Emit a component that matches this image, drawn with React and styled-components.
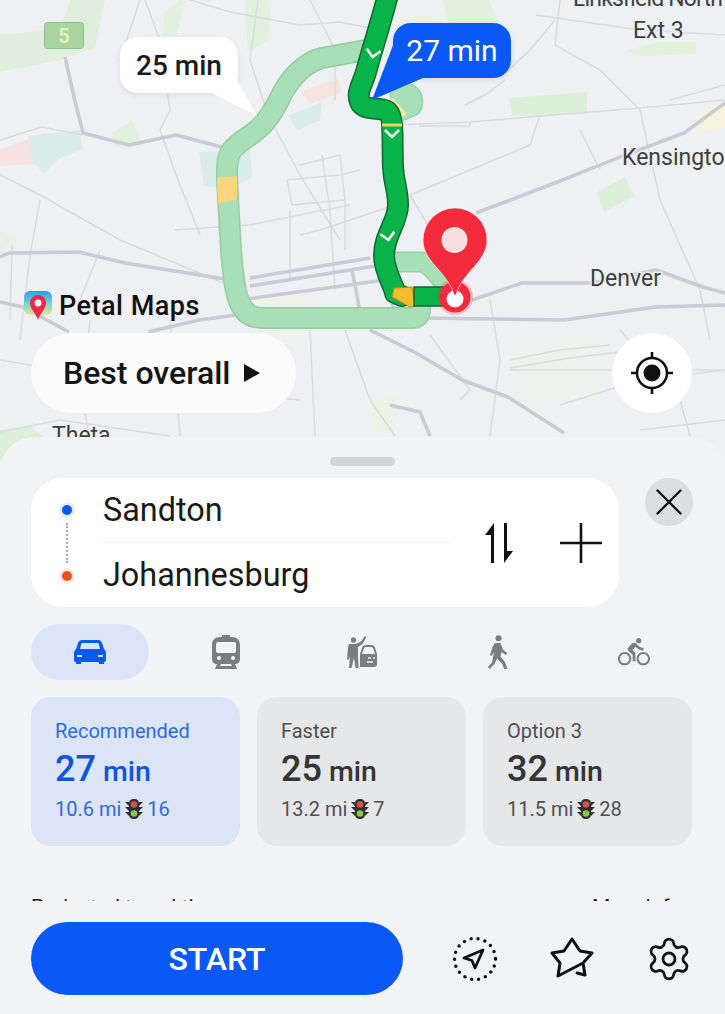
import React from 'react'
import styled, { createGlobalStyle } from 'styled-components'
import { MdDirectionsBike } from 'react-icons/md'
import { Settings, X } from 'lucide-react'

const GlobalStyle = createGlobalStyle`
    html, body { margin: 0; padding: 0; background: #f1f3f5; }
    * { box-sizing: border-box; }
`

const Screen = styled.div`
    width: 725px;
    height: 1014px;
    overflow: hidden;
    display: flex;
    flex-direction: column;
    font-family: Roboto, "Noto Sans", sans-serif;
    color: #1a1a1a;
`
const MapArea = styled.div`
    position: relative;
    height: 475px;
    flex-shrink: 0;
    background: #eef0f3;
`
const MapCanvas = styled.svg`
    display: block;
    width: 725px;
    height: 475px;
`
const MapLabel = styled.text`
    font-family: Roboto, sans-serif;
    font-size: 23px;
    fill: #3c3f42;
    paint-order: stroke;
    stroke: #eef0f3;
    stroke-width: 3px;
`
const Bubble = styled.div`
    position: absolute;
    left: ${p => p.$x}px;
    top: ${p => p.$y}px;
    width: 118px;
    height: ${p => p.$h}px;
    border-radius: 18px;
    display: flex;
    align-items: center;
    justify-content: center;
    font-size: ${p => (p.$active ? 30 : 28)}px;
    font-weight: ${p => (p.$active ? 400 : 500)};
    color: ${p => (p.$active ? '#fff' : '#1a1a1a')};
    background: ${p => (p.$active ? '#0a59f7' : '#fff')};
    box-shadow: 0 2px 6px rgba(0, 0, 0, 0.08);
`
const BubbleTail = styled.svg`
    position: absolute;
    left: 0;
    top: 0;
    width: 1px;
    height: 1px;
    overflow: visible;
`
const BubbleText = styled.span`
    position: relative;
`
const Watermark = styled.div`
    position: absolute;
    left: 24px;
    top: 290px;
    display: flex;
    align-items: center;
    gap: 7px;
    font-size: 27px;
    font-weight: 500;
    letter-spacing: 0.5px;
    color: #111;
`
const MapControls = styled.div`
    position: absolute;
    left: 31px;
    right: 33px;
    top: 333px;
    display: flex;
    justify-content: space-between;
`
const SortPill = styled.div`
    width: 265px;
    height: 80px;
    border-radius: 40px;
    background: #fbfbfc;
    display: flex;
    align-items: center;
    gap: 13px;
    padding-left: 32px;
    font-size: 32px;
    font-weight: 500;
    color: #151515;
`
const LocateButton = styled.div`
    width: 80px;
    height: 80px;
    border-radius: 50%;
    background: #fff;
    display: flex;
    align-items: center;
    justify-content: center;
`

const Sheet = styled.div`
    position: relative;
    flex: 1;
    margin-top: -38px;
    padding: 20px 32px 0 31px;
    background: #f1f3f5;
    border-radius: 34px 34px 0 0;
    display: flex;
    flex-direction: column;
`
const Handle = styled.div`
    width: 65px;
    height: 9px;
    border-radius: 5px;
    background: #d3d5d8;
    align-self: center;
    margin-bottom: 12px;
`
const SearchRow = styled.div`
    display: flex;
    justify-content: space-between;
    align-items: flex-start;
`
const SearchCard = styled.div`
    width: 588px;
    height: 129px;
    border-radius: 32px;
    background: #fff;
    display: flex;
    align-items: center;
    padding-left: 29px;
`
const StopRail = styled.div`
    width: 14px;
    height: 76px;
    display: flex;
    flex-direction: column;
    align-items: center;
    justify-content: space-between;
`
const StopDot = styled.div`
    width: 10px;
    height: 10px;
    flex-shrink: 0;
    border-radius: 50%;
    background: ${p => p.$color};
    box-shadow: 0 0 0 3px ${p => p.$halo};
`
const StopLine = styled.div`
    flex: 1;
    margin: 8px 0;
    border-left: 2px dotted #a8a8a8;
`
const StopFields = styled.div`
    width: 347px;
    margin-left: 29px;
    display: flex;
    flex-direction: column;
`
const StopField = styled.div`
    height: 64px;
    display: flex;
    align-items: center;
    font-size: 32.4px;
    border-bottom: ${p => (p.$divider ? '1px solid #eeeeee' : 'none')};
`
const SearchActions = styled.div`
    display: flex;
    align-items: center;
    gap: 46px;
    margin-left: 34px;
`
const CloseButton = styled.div`
    width: 48px;
    height: 48px;
    border-radius: 50%;
    background: #dcdee0;
    display: flex;
    align-items: center;
    justify-content: center;
`
const ModeRow = styled.div`
    display: flex;
    justify-content: space-between;
    margin-top: 17px;
`
const ModeTab = styled.div`
    width: 118px;
    height: 56px;
    border-radius: 28px;
    display: flex;
    align-items: center;
    justify-content: center;
    color: #7b7d80;
    background: ${p => (p.$active ? '#dbe5f7' : 'transparent')};
`
const RouteRow = styled.div`
    display: flex;
    gap: 17px;
    margin-top: 17px;
`
const RouteCard = styled.div`
    width: 209px;
    height: 149px;
    border-radius: 20px;
    padding: 22px 0 0 24px;
    background: ${p => (p.$active ? '#dbe5f7' : '#e6e7e9')};
    color: ${p => (p.$active ? '#0c55e0' : '#333537')};
`
const RouteTag = styled.div`
    font-size: 20px;
    line-height: 24px;
    opacity: 0.85;
`
const RouteTime = styled.div`
    font-size: 28.5px;
    font-weight: 500;
    line-height: 44px;
    margin-top: 4px;
    b {
        font-size: 36px;
        font-weight: 500;
    }
`
const RouteMeta = styled.div`
    display: flex;
    align-items: center;
    gap: 4px;
    font-size: 20px;
    line-height: 26px;
    margin-top: 2px;
    opacity: 0.85;
`
const ClippedDetails = styled.div`
    height: 55px;
    overflow: hidden;
    display: flex;
    justify-content: space-between;
    padding-top: 49px;
    font-size: 21px;
    line-height: 24px;
    white-space: nowrap;
`
const BottomBar = styled.div`
    display: flex;
    align-items: center;
    margin-top: 21px;
`
const StartButton = styled.div`
    width: 372px;
    height: 73px;
    border-radius: 37px;
    background: #0a59f7;
    color: #fff;
    font-size: 32px;
    font-weight: 500;
    display: flex;
    align-items: center;
    justify-content: center;
`
const BarIcons = styled.div`
    flex: 1;
    display: flex;
    justify-content: space-between;
    align-items: center;
    padding: 0 0 0 49px;
`

const greens = [
    ['M0 34 L60 30 L70 0 L105 0 L95 48 L60 60 L0 72Z', '#e0efdd'],
    ['M165 12 L180 0 L186 0 L170 60 L160 58Z', '#e3f0e0'],
    ['M245 0 L272 0 L268 40 L248 52Z', '#e2f0de'],
    ['M444 0 L488 0 L500 24 L470 32 L448 22Z', '#e2f0de'],
    ['M510 98 L587 92 L587 114 L512 116Z', '#dcefd8'],
    ['M597 192 L625 177 L634 196 L604 212Z', '#dcefd8'],
    ['M628 50 L660 42 L696 42 L696 54 L634 56Z', '#e2f0de'],
    ['M0 150 L30 138 L34 164 L0 166Z', '#f6e2e0'],
    ['M28 136 L80 130 L82 150 L60 158 L44 174 L34 164Z', '#d9ede8'],
    ['M112 134 L132 120 L144 146 L116 148Z', '#e2f0de'],
    ['M300 92 L338 78 L342 92 L310 104Z', '#f6e4e0'],
    ['M288 116 L322 102 L320 120 L298 130Z', '#d9ede8'],
    ['M199 152 L250 150 L252 178 L230 188 L204 186Z', '#d9ede8'],
    ['M695 118 L725 100 L725 128 L698 132Z', '#f8f3dc'],
    ['M0 230 L20 240 L0 250Z', '#e9f2e2'],
    ['M0 430 L30 426 L60 450 L0 460Z', '#dcefd8'],
    ['M370 400 L400 395 L395 430 L372 432Z', '#eaf3e6'],
    ['M510 340 L600 335 L600 400 L515 405Z', '#edf2ee'],
    ['M250 300 L310 296 L300 340 L255 330Z', '#f0f1e8'],
]

const thickRoads = [
    [0, 257, 9, 253, 79, 252, 125, 263, 231, 280],
    [65, 57, 74, 97, 83, 133, 129, 145, 176, 135, 222, 147],
    [476, 213, 555, 183, 620, 157, 684, 133, 725, 103],
    [425, 318, 564, 320, 656, 307, 725, 305],
    [472, 300, 522, 283, 592, 283, 656, 270, 703, 287, 725, 293],
    [370, 330, 416, 353, 462, 380, 508, 397, 564, 433],
    [148, 332, 199, 320, 236, 315],
    [0, 302, 23, 307, 69, 332],
    [250, 278, 370, 258],
    [250, 286, 375, 266],
    [240, 300, 385, 280],
    [385, 262, 395, 320],
    [352, 270, 362, 322],
    [390, 405, 420, 412, 430, 436],
]

const thinRoads = [
    [0, 140, 42, 127, 83, 135],
    [145, 0, 160, 40, 170, 110, 160, 130, 178, 180, 200, 235],
    [0, 175, 40, 195, 120, 240, 240, 290],
    [40, 200, 30, 255, 20, 340],
    [190, 0, 230, 12, 300, 25, 340, 22, 380, 30],
    [258, 0, 250, 60, 268, 115, 300, 175, 340, 240],
    [310, 0, 335, 50, 335, 100],
    [300, 165, 340, 155, 345, 200, 345, 250],
    [287, 180, 340, 175, 360, 170],
    [287, 180, 292, 205, 345, 200],
    [322, 155, 330, 210, 335, 290],
    [290, 210, 290, 280],
    [175, 230, 250, 225, 350, 205],
    [300, 235, 320, 230, 395, 205],
    [410, 195, 530, 145, 540, 115],
    [395, 125, 470, 122, 640, 108, 725, 100],
    [420, 122, 420, 126, 470, 126, 470, 122],
    [560, 0, 555, 45, 600, 70, 640, 110, 660, 200, 700, 290, 710, 340],
    [536, 15, 640, 30, 725, 35],
    [500, 78, 530, 50, 555, 20],
    [465, 105, 485, 95, 505, 80],
    [410, 195, 440, 245],
    [490, 300, 500, 360, 490, 436],
    [580, 130, 600, 170],
    [670, 100, 725, 85],
    [170, 320, 180, 436],
    [90, 320, 82, 400, 90, 436],
    [0, 432, 60, 420, 170, 436],
    [310, 330, 315, 436],
    [345, 330, 370, 400, 395, 436],
    [0, 360, 120, 380, 300, 400],
    [510, 360, 560, 350, 610, 345],
    [510, 368, 570, 358, 620, 352],
    [430, 335, 470, 390, 460, 400],
    [510, 370, 720, 370],
    [560, 405, 640, 380, 725, 370],
    [620, 330, 680, 400, 690, 436],
    [640, 430, 725, 420],
    [120, 60, 140, 0],
    [80, 300, 100, 250],
    [12, 245, 10, 320],
]

const toPoints = arr => {
    const out = []
    for (let i = 0; i < arr.length; i += 2) out.push(`${arr[i]},${arr[i + 1]}`)
    return out.join(' ')
}

const Line = ({ d, outline, color, width }) => (
    <g fill="none" strokeLinecap="round" strokeLinejoin="round">
        <path d={d} stroke={outline} strokeWidth={width + 3} />
        <path d={d} stroke={color} strokeWidth={width} />
    </g>
)

const Chevron = ({ x, y, rotate = 0 }) => (
    <path
        d={`M${x - 7} ${y - 4} L${x} ${y + 3} L${x + 7} ${y - 4}`}
        transform={`rotate(${rotate} ${x} ${y})`}
        fill="none"
        stroke="#fff"
        strokeWidth="2.6"
    />
)

const altA = 'M366 50 L322 58 C306 62 292 76 283 92 C276 106 272 114 265 122 C256 134 240 140 232 150 C226 158 227 170 227 180 L231 250 C234 285 236 300 244 310 C250 317 256 318 265 318 L412 318 C422 318 420 308 420 304'
const altB = 'M400 94 C412 90 414 100 412 106 L398 112'
const altC = 'M392 262 L420 262 C430 262 436 274 452 292'
const mainA = 'M388 -5 C380 25 372 50 366 72 C362 86 356 92 360 102 C364 112 382 106 388 112 C394 118 392 140 393 167 C394 185 398 190 398 205 C398 222 384 235 384 255 C384 272 394 285 395 293 L402 296'

const RouteMap = () => (
    <MapCanvas viewBox="0 0 725 475">
        {greens.map(([d, fill], i) => <path key={i} d={d} fill={fill} />)}
        <g fill="none" strokeLinejoin="round">
            {thinRoads.map((r, i) => <polyline key={i} points={toPoints(r)} stroke="#d9dbde" strokeWidth="1.5" />)}
            {thickRoads.map((r, i) => <polyline key={i} points={toPoints(r)} stroke="#c9ccd0" strokeWidth="3.5" />)}
        </g>
        <rect x="44.5" y="22.5" width="39" height="26" rx="3" fill="#a8d59f" stroke="#8fbf8b" />
        <text x="64" y="43" textAnchor="middle" fontFamily="Roboto" fontWeight="700" fontSize="20" fill="#e8efb0">5</text>
        <Line d={altC} outline="#98d2a6" color="#a8dfb6" width={18} />
        <Line d={altB} outline="#98d2a6" color="#a8dfb6" width={18} />
        <path d="M390 100 L404 116" stroke="#fde9a3" strokeWidth="7" />
        <Line d={altA} outline="#93cea1" color="#a8dfb6" width={19} />
        <path d="M217 178 L237 176 L237 199 L218 204Z" fill="#fdd67e" />
        <Line d={mainA} outline="#0d6a30" color="#08b34a" width={19} />
        <path d="M382 125 L402 125" stroke="#e8d85a" strokeWidth="3" />
        <path d="M394 288 L412 287 L415 306 L410 307 L392 297Z" fill="#fbbc2d" stroke="#b48a20" strokeWidth="1" />
        <path d="M414 287 L444 287 L444 306 L414 306Z" fill="#08b34a" stroke="#0d6a30" strokeWidth="1.5" />
        <Chevron x={373} y={54} rotate={10} />
        <Chevron x={392} y={134} />
        <Chevron x={388} y={237} rotate={-10} />
        <circle cx="455" cy="297" r="18" fill="#f22c3d" opacity="0.25" />
        <circle cx="455" cy="297" r="15.5" fill="#f22c3d" />
        <circle cx="455" cy="299" r="8.5" fill="#fff" />
        <path d="M423 240 A32 32 0 1 1 487 240 C487 262 462 272 456 295 L454 295 C448 272 423 262 423 240Z" fill="#f22c3d" stroke="#ffffff88" strokeWidth="1" />
        <circle cx="454.5" cy="240" r="13" fill="#f7dedf" />
        <MapLabel x="573" y="6" textLength="150">Linksfield North</MapLabel>
        <MapLabel x="633" y="38">Ext 3</MapLabel>
        <MapLabel x="622" y="165">Kensington</MapLabel>
        <MapLabel x="590" y="286">Denver</MapLabel>
        <MapLabel x="52" y="443">Theta</MapLabel>
    </MapCanvas>
)

const PetalLogo = () => (
    <svg width="28" height="30" viewBox="0 0 28 30">
        <defs>
            <linearGradient id="petal" x1="0" y1="0" x2="0" y2="1">
                <stop offset="0" stopColor="#2d9bf0" />
                <stop offset="0.55" stopColor="#7fd6d0" />
                <stop offset="1" stopColor="#e7e58a" />
            </linearGradient>
        </defs>
        <rect x="0" y="0" width="28" height="24" rx="6" fill="url(#petal)" />
        <path d="M6 12 A8 8 0 1 1 22 12 C22 18 16 22 14 29 C12 22 6 18 6 12Z" fill="#ee2a4a" />
        <circle cx="14" cy="12" r="3.4" fill="#fff" />
    </svg>
)

const PlayGlyph = () => (
    <svg width="18" height="20" viewBox="0 0 18 20">
        <path d="M1 1 L17 10 L1 19Z" fill="#111" />
    </svg>
)

const LocateIcon = () => (
    <svg width="44" height="44" viewBox="0 0 44 44" fill="none" stroke="#111" strokeWidth="2.6">
        <circle cx="22" cy="22" r="15" />
        <circle cx="22" cy="22" r="8.5" fill="#111" stroke="none" />
        <path d="M22 1v6M22 37v6M1 22h6M37 22h6" />
    </svg>
)

const SwapIcon = () => (
    <svg width="30" height="40" viewBox="0 0 30 40" fill="#111">
        <path d="M7 40 V12 H1 L10 0 V40Z" />
        <path d="M23 0 V28 H29 L20 40 V0Z" />
    </svg>
)

const PlusIcon = () => (
    <svg width="42" height="40" viewBox="0 0 42 40" stroke="#111" strokeWidth="2.6">
        <path d="M0 20 H42 M21 0 V40" />
    </svg>
)

const CarIcon = () => (
    <svg width="32" height="26" viewBox="0 0 32 26" fill="#0a59f7">
        <path d="M8 1 H24 C26 1 27 2 28 4 L30 10 C31.500 11 32 13 32 15 V21 C32 22.500 31 23 30 23 V25 H25 V23 H7 V25 H2 V23 C1 23 0 22.500 0 21 V15 C0 13 .5 11 2 10 L4 4 C5 2 6 1 8 1Z" />
        <path d="M7.500 4 H24.500 L26 10 H6Z" fill="#dbe5f7" />
        <path d="M3 16 H8 V18 H3ZM24 16 H29 V18 H24Z" fill="#dbe5f7" />
    </svg>
)

const TrainIcon = () => (
    <svg width="28" height="34" viewBox="0 0 28 34" fill="#7b7d80">
        <path d="M10 0 H18 V2 H20 C25 2 28 5 28 10 V24 C28 27 26 29 23 29 H5 C2 29 0 27 0 24 V10 C0 5 3 2 8 2 H10Z" />
        <rect x="4" y="7" width="20" height="11" rx="2" fill="#f1f3f5" />
        <circle cx="7" cy="23" r="2" fill="#f1f3f5" />
        <circle cx="21" cy="23" r="2" fill="#f1f3f5" />
        <path d="M5 29 H9 L8 31 H20 L19 29 H23 L25 34 H3Z" />
    </svg>
)

const TaxiIcon = () => (
    <svg width="30" height="34" viewBox="0 0 30 34" fill="#7b7d80">
        <circle cx="6.500" cy="5" r="2.700" />
        <path d="M2 9 H9 L14 6.500 L18 1 L19.500 2 L15.500 9 L11 12 V20 L11.500 33 H8.500 L7 23 L4.500 33 H2 L3 21 L1.500 25 L0 24 L1 12Z" />
        <path d="M14 19 L16 13 C16.500 11.500 18 11 19 11 H24 C26 11 27 12 27.500 14 L29 19" fill="none" stroke="#7b7d80" strokeWidth="2" />
        <path d="M13 19 H30 V29 C30 31 29 32 27 32 H13Z" />
        <path d="M21 23 H24 M26 23 H28 M20 27 H26" stroke="#f1f3f5" strokeWidth="1.400" />
    </svg>
)

const WalkIcon = () => (
    <svg width="20" height="34" viewBox="0 0 20 34" fill="#7b7d80">
        <circle cx="10.500" cy="3.200" r="3" />
        <path d="M7 8 H12.500 L15 14.500 L19 18 L17.800 20 L13.500 17 L12.500 21.500 L17 27 L19.500 34 L16.200 34 L14 28.500 L9 23.500 L6.500 29 L1.500 34 L0 32 L4 27.500 L6 17 L3.500 21 L2 20 L4.500 12Z" />
    </svg>
)

const TrafficLight = () => (
    <svg width="18" height="20" viewBox="0 0 18 20">
        <path d="M0 3 H4 V7 Z M18 3 H14 V7 Z M0 8 H4 V12 Z M18 8 H14 V12 Z M0 13 H4 V17 Z M18 13 H14 V17 Z" fill="#111" />
        <rect x="4" y="0" width="10" height="20" rx="4.500" fill="#111" />
        <circle cx="9" cy="5.500" r="3.300" fill="#d9352b" />
        <circle cx="9" cy="14.500" r="3.300" fill="#7ec32e" />
    </svg>
)

const NavIcon = () => (
    <svg width="46" height="46" viewBox="0 0 46 46" fill="none" stroke="#111">
        <circle cx="23" cy="23" r="20.500" strokeWidth="3.500" strokeDasharray="0 7.080" strokeLinecap="round" />
        <path d="M31 14 L12 22 L20 24.500 L23 32Z" strokeWidth="2.800" strokeLinejoin="round" />
    </svg>
)

const StarIcon = () => (
    <svg width="44" height="44" viewBox="0 0 44 44" fill="none" stroke="#111" strokeWidth="3" strokeLinejoin="round" strokeLinecap="round">
        <path d="M33 26 L42 16 L30 14 L22 2 L14 14 L2 16 L10 26 L8 39 L33 26 L35 38 L27 36" />
    </svg>
)

const routes = [
    { tag: 'Recommended', time: 27, dist: '10.6 mi', lights: 16, active: true },
    { tag: 'Faster', time: 25, dist: '13.2 mi', lights: 7 },
    { tag: 'Option 3', time: 32, dist: '11.5 mi', lights: 28 },
]

const App = () => {
    return (
        <Screen>
            <GlobalStyle />
            <MapArea>
                <RouteMap />
                <Bubble $x={120} $y={37} $h={56}>
                    <BubbleTail><path d="M88 54 L137 79 L117 44Z" fill="#fff" /></BubbleTail>
                    <BubbleText>25 min</BubbleText>
                </Bubble>
                <Bubble $x={393} $y={23} $h={55} $active>
                    <BubbleTail><path d="M2 17 L-21 77 L30 55Z" fill="#0a59f7" /></BubbleTail>
                    <BubbleText>27 min</BubbleText>
                </Bubble>
                <Watermark><PetalLogo />Petal Maps</Watermark>
                <MapControls>
                    <SortPill>Best overall<PlayGlyph /></SortPill>
                    <LocateButton><LocateIcon /></LocateButton>
                </MapControls>
            </MapArea>
            <Sheet>
                <Handle />
                <SearchRow>
                    <SearchCard>
                        <StopRail>
                            <StopDot $color="#0a59f7" $halo="#e4edfd" />
                            <StopLine />
                            <StopDot $color="#f0501e" $halo="#fdeae4" />
                        </StopRail>
                        <StopFields>
                            <StopField $divider>Sandton</StopField>
                            <StopField>Johannesburg</StopField>
                        </StopFields>
                        <SearchActions>
                            <SwapIcon />
                            <PlusIcon />
                        </SearchActions>
                    </SearchCard>
                    <CloseButton><X size={46} strokeWidth={1.2} color="#111" /></CloseButton>
                </SearchRow>
                <ModeRow>
                    <ModeTab $active><CarIcon /></ModeTab>
                    <ModeTab><TrainIcon /></ModeTab>
                    <ModeTab><TaxiIcon /></ModeTab>
                    <ModeTab><WalkIcon /></ModeTab>
                    <ModeTab><MdDirectionsBike size={32} /></ModeTab>
                </ModeRow>
                <RouteRow>
                    {routes.map(r => (
                        <RouteCard key={r.tag} $active={r.active}>
                            <RouteTag>{r.tag}</RouteTag>
                            <RouteTime><b>{r.time}</b> min</RouteTime>
                            <RouteMeta>{r.dist}<TrafficLight />{r.lights}</RouteMeta>
                        </RouteCard>
                    ))}
                </RouteRow>
                <ClippedDetails>
                    <span>Projected travel time</span>
                    <span>More info ›</span>
                </ClippedDetails>
                <BottomBar>
                    <StartButton>START</StartButton>
                    <BarIcons>
                        <NavIcon />
                        <StarIcon />
                        <Settings size={48} strokeWidth={1.4} color="#111" />
                    </BarIcons>
                </BottomBar>
            </Sheet>
        </Screen>
    )
}

export default App
